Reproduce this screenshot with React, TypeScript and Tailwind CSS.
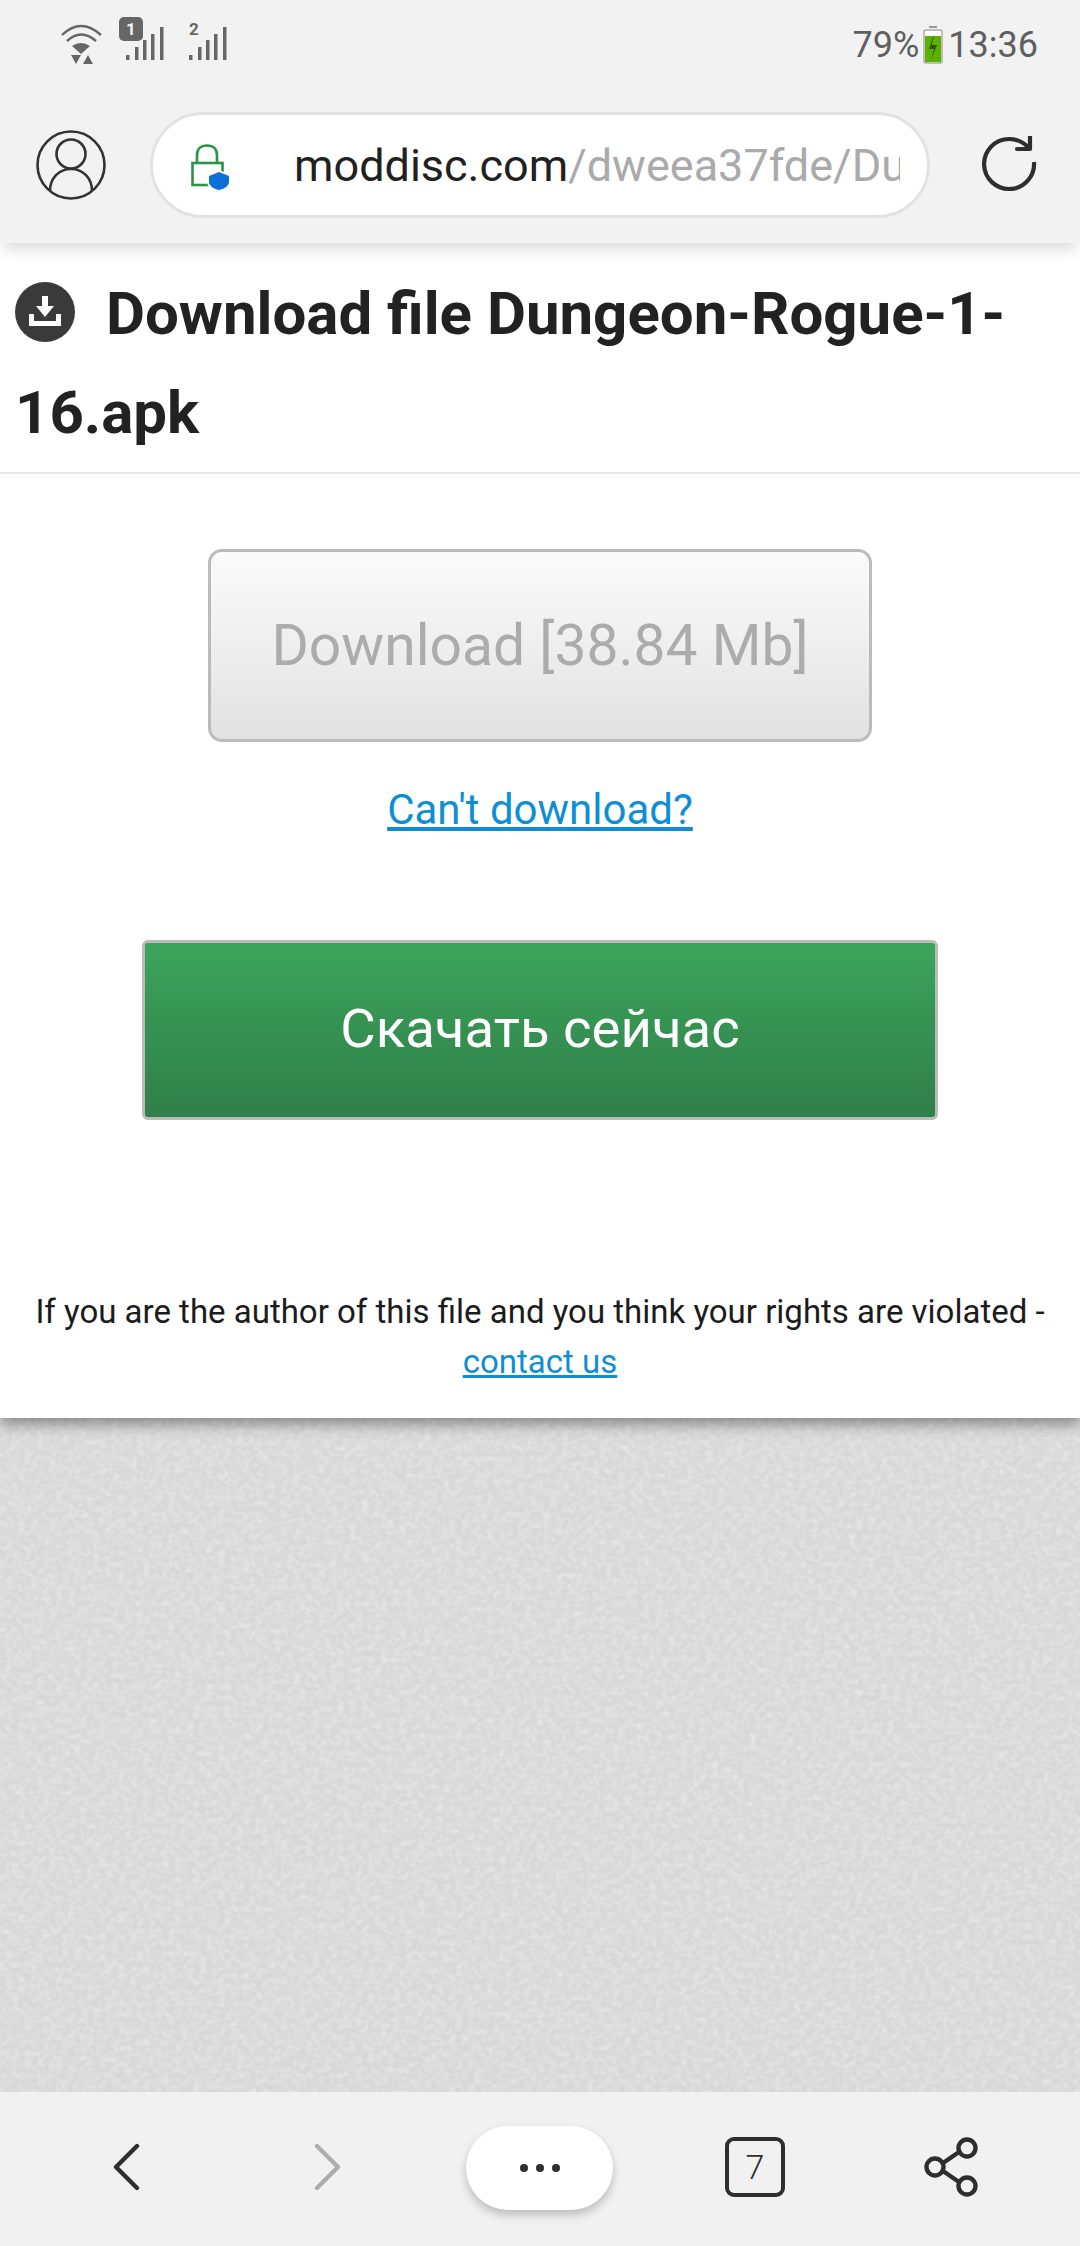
export default function App() {
  return (
    <div className="flex h-[2246px] w-[1080px] flex-col overflow-hidden bg-white font-['Roboto',sans-serif]">
      {/* status bar */}
      <div className="flex h-[87px] shrink-0 items-start justify-between bg-[#f2f2f2] pr-[42px]">
        <svg width="240" height="87" viewBox="0 0 240 87" className="shrink-0">
          <g fill="none" stroke="#666" strokeWidth="2.4">
            <path d="M62 35 Q81 17 101 35" />
            <path d="M67 41 Q81 28 96 41" />
          </g>
          <path d="M72 46 Q81 40 90 46 L81 54 Z" fill="#666" />
          <path d="M71 55 H81 L76 64 Z M83 64 L88 55 L93 64 Z" fill="#666" />
          <rect x="119" y="17" width="24" height="24" rx="5" fill="#666" />
          <text x="131" y="35" textAnchor="middle" fontSize="17" fontWeight="700" fill="#f2f2f2" fontFamily="Roboto">1</text>
          <g fill="#666">
            <rect x="126" y="55" width="3.500" height="5" />
            <rect x="135" y="47" width="3.500" height="13" />
            <rect x="143" y="40" width="3.500" height="20" />
            <rect x="151" y="34" width="3.500" height="26" />
            <rect x="160" y="27" width="3.500" height="33" />
            <rect x="189" y="55" width="3.500" height="5" />
            <rect x="198" y="47" width="3.500" height="13" />
            <rect x="206" y="40" width="3.500" height="20" />
            <rect x="214" y="34" width="3.500" height="26" />
            <rect x="223" y="27" width="3.500" height="33" />
          </g>
          <text x="194" y="35" textAnchor="middle" fontSize="17" fontWeight="700" fill="#666" fontFamily="Roboto">2</text>
        </svg>
        <div className="mt-[24px] flex items-center text-[36px] leading-[42px] text-[#5f5f5f]">
          <span>79%</span>
          <svg width="20" height="38" viewBox="0 0 20 38" className="ml-[4px] mr-[5px] shrink-0">
            <rect x="6" y="0" width="8" height="2" fill="#999" />
            <rect x="1" y="4" width="18" height="33" rx="2" fill="#fff" stroke="#aaa" strokeWidth="1.5" />
            <rect x="2" y="10" width="16" height="26" fill="#5cb000" />
            <path d="M11 8 L6 23 H11 L8 34 L14 19 H9 Z" fill="#2c5a00" />
          </svg>
          <span>13:36</span>
        </div>
      </div>

      {/* browser toolbar */}
      <div className="relative z-10 flex h-[156px] shrink-0 items-start bg-[#f2f2f2] pl-[36px] shadow-[0_12px_12px_-4px_rgba(0,0,0,0.12)]">
        <svg width="70" height="72" viewBox="0 0 70 72" className="mt-[42px] shrink-0" fill="none" stroke="#333" strokeWidth="2.6">
          <circle cx="35" cy="36" r="33.5" />
          <circle cx="35" cy="25" r="14.5" />
          <path d="M14 62 C14 49 23 40 35 40 C47 40 56 49 56 62" />
        </svg>
        <div className="ml-[44px] mt-[25px] flex h-[106px] w-[780px] shrink-0 items-center rounded-full border-[3px] border-[#e2e2e2] bg-white pl-[38px]">
          <svg width="40" height="48" viewBox="0 0 40 48" className="mt-[5px] shrink-0">
            <path d="M6 19 V11 C6 5 10 1.500 16 1.500 C22 1.500 26 5 26 11 V19" fill="none" stroke="#2b9348" strokeWidth="2.6" />
            <rect x="1.500" y="19" width="30" height="22" fill="none" stroke="#2b9348" strokeWidth="2.6" />
            <path d="M16 31 L28 26 L40 31 V38 C40 43 33 47 28 48 C23 47 16 43 16 38 Z" fill="#fff" />
            <path d="M18 32 L28 28 L38 32 V38 C38 42 33 45 28 46 C23 45 18 42 18 38 Z" fill="#0d6fd8" />
          </svg>
          <div className="ml-[63px] mt-[1px] w-[606px] overflow-hidden whitespace-nowrap text-[45px] leading-[60px]">
            <span className="text-[#212121]">moddisc.com</span>
            <span className="text-[#aaaaaa]">/dweea37fde/Du</span>
          </div>
        </div>
        <svg width="56" height="56" viewBox="0 0 56 56" className="ml-[52px] mt-[49px] shrink-0" fill="none" stroke="#2e2e2e" strokeWidth="4.2">
          <path d="M52 26 A25 25 0 1 1 27 3 Q39 3 48 13" />
          <path d="M35 13 H48 V1" strokeLinecap="round" strokeLinejoin="round" />
        </svg>
      </div>

      {/* page */}
      <div className="relative flex h-[1175px] shrink-0 flex-col bg-white shadow-[0_6px_14px_rgba(0,0,0,0.4)]">
        <h1 className="h-[231px] border-b-2 border-[#e8e8e8] pl-[15px] pr-[10px] pt-[21px] text-[60px] font-bold leading-[99px] text-[#222222]">
          <svg width="60" height="60" viewBox="0 0 60 60" className="mr-[31px] inline-block align-[-8px]">
            <circle cx="30" cy="30" r="30" fill="#3a3a3a" />
            <path d="M27 14 H33 V24 H39 L30 35 L21 24 H27 Z" fill="#fff" />
            <path d="M14 32 H19 V39 H41 V32 H46 V44 H14 Z" fill="#fff" />
          </svg>
          Download file Dungeon-Rogue-1-16.apk
        </h1>
        <div className="flex flex-col items-center">
          <button className="mt-[75px] h-[193px] w-[664px] rounded-[14px] border-[3px] border-[#bbbbbb] bg-gradient-to-b from-[#fbfbfb] to-[#e2e2e2] text-[57px] text-[#acacac]">
            Download [38.84 Mb]
          </button>
          <a className="mt-[43px] text-[42px] leading-[50px] text-[#0e8fd5] underline">Can't download?</a>
          <button className="mt-[105px] h-[180px] w-[796px] rounded-[6px] border-[3px] border-[#bbbbbb] bg-gradient-to-b from-[#3ca55c] to-[#2f7f48] pb-[2px] text-[54.5px] text-white">
            Скачать сейчас
          </button>
          <p className="mt-[167px] text-center text-[33px] leading-[50px] text-[#1c1c1c]">
            If you are the author of this file and you think your rights are violated -
            <br />
            <a className="text-[#0e8fd5] underline">contact us</a>
          </p>
        </div>
      </div>

      {/* textured page background */}
      <div className="min-h-0 flex-1 bg-[#dcdcdc]">
        <svg className="block h-full w-full">
          <filter id="paper" x="0" y="0" width="100%" height="100%">
            <feTurbulence type="fractalNoise" baseFrequency="0.16 0.18" numOctaves="3" seed="4" />
            <feColorMatrix values="0 0 0 0 0.92  0 0 0 0 0.92  0 0 0 0 0.92  0.6 0.6 0 0 -0.48" />
          </filter>
          <rect width="100%" height="100%" fill="#d8d8d8" />
          <rect width="100%" height="100%" filter="url(#paper)" />
        </svg>
      </div>

      {/* bottom bar */}
      <div className="flex h-[154px] shrink-0 items-start bg-[#f1f1f1] pl-[113px]">
        <svg width="28" height="48" viewBox="0 0 28 48" className="mt-[51px] shrink-0" fill="none" stroke="#2e2e2e" strokeWidth="4.4" strokeLinecap="round" strokeLinejoin="round">
          <path d="M24 3 L3 24 L24 45" />
        </svg>
        <svg width="28" height="48" viewBox="0 0 28 48" className="ml-[172px] mt-[51px] shrink-0" fill="none" stroke="#adadad" strokeWidth="4.4" strokeLinecap="round" strokeLinejoin="round">
          <path d="M4 3 L25 24 L4 45" />
        </svg>
        <div className="ml-[125px] mt-[34px] flex h-[84px] w-[147px] shrink-0 items-center justify-center gap-[8px] rounded-full bg-white shadow-[0_5px_10px_rgba(0,0,0,0.22)]">
          <span className="h-[8px] w-[8px] rounded-full bg-[#2e2e2e]" />
          <span className="h-[8px] w-[8px] rounded-full bg-[#2e2e2e]" />
          <span className="h-[8px] w-[8px] rounded-full bg-[#2e2e2e]" />
        </div>
        <div className="ml-[112px] mt-[45px] flex h-[60px] w-[60px] shrink-0 items-center justify-center rounded-[9px] border-[4px] border-[#2e2e2e] text-[34px] font-light text-[#2e2e2e]">
          7
        </div>
        <svg width="54" height="60" viewBox="0 0 54 60" className="ml-[139px] mt-[45px] shrink-0" fill="none" stroke="#2e2e2e" strokeWidth="4.4">
          <circle cx="11" cy="30" r="8.5" />
          <circle cx="43" cy="11" r="8.5" />
          <circle cx="43" cy="49" r="8.5" />
          <path d="M19 26 L35 15 M19 34 L35 45" />
        </svg>
      </div>
    </div>
  );
}
